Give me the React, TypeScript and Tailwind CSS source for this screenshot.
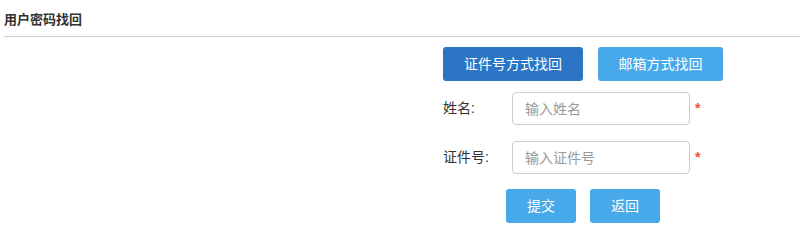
export default function App() {
  return (
    <div className="min-h-screen bg-white px-[4px] font-['Liberation_Sans','Noto_Sans_CJK_SC',sans-serif] text-[#333]">
      <div className="flex h-[37px] items-center border-b border-[#ccc] pt-[2px]">
        <h1 className="text-[13px] font-bold leading-none text-[#333]">用户密码找回</h1>
      </div>

      <div className="ml-[439px] mt-[10px] flex flex-col">
        <div className="flex gap-[15px]">
          <button className="h-[34px] w-[140px] rounded-[3px] bg-[#2b75c4] text-[14px] text-white">
            证件号方式找回
          </button>
          <button className="h-[34px] w-[125px] rounded-[3px] bg-[#47a9ea] text-[14px] text-white">
            邮箱方式找回
          </button>
        </div>

        <div className="mt-[11px] flex items-center">
          <label className="w-[69px] text-[14px]">姓名:</label>
          <input
            className="h-[33px] w-[178px] rounded-[4px] border border-[#ccc] px-[12px] text-[14px] outline-none placeholder:text-[#999]"
            placeholder="输入姓名"
          />
          <span className="ml-[5px] -mt-[2px] text-[14px] font-bold text-[#f4503c] leading-none">*</span>
        </div>

        <div className="mt-[16px] flex items-center">
          <label className="w-[69px] text-[14px]">证件号:</label>
          <input
            className="h-[33px] w-[178px] rounded-[4px] border border-[#ccc] px-[12px] text-[14px] outline-none placeholder:text-[#999]"
            placeholder="输入证件号"
          />
          <span className="ml-[5px] -mt-[2px] text-[14px] font-bold text-[#f4503c] leading-none">*</span>
        </div>

        <div className="ml-[63px] mt-[15px] flex gap-[14px]">
          <button className="h-[34px] w-[70px] rounded-[3px] bg-[#47a9ea] text-[14px] text-white">提交</button>
          <button className="h-[34px] w-[70px] rounded-[3px] bg-[#47a9ea] text-[14px] text-white">返回</button>
        </div>
      </div>
    </div>
  )
}
